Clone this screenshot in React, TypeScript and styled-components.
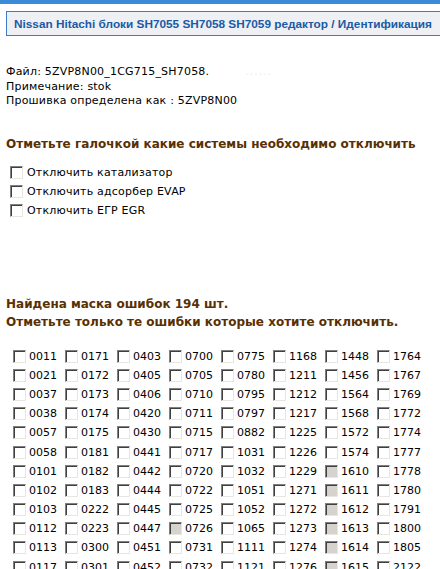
import React from "react";
import styled, { createGlobalStyle } from "styled-components";

const GlobalStyle = createGlobalStyle`
  html, body { margin: 0; padding: 0; background: #ffffff; overflow: hidden; }
  body { width: 440px; height: 569px; }
`;

const Page = styled.div`
  width: 440px;
  overflow: hidden;
  font-family: "DejaVu Sans", Verdana, sans-serif;
  color: #000;
`;

const TopBar = styled.div`
  height: 4px;
  background: #3b8bd8;
`;

const TitleBox = styled.div`
  margin: 7px 0 0 6px;
  width: 460px;
  height: 23px;
  box-sizing: content-box;
  border: 1px solid #3a7dc6;
  background: #eef0f3;
  display: flex;
  align-items: center;
  padding-left: 7px;
`;

const Title = styled.h1`
  margin: 0;
  font-family: "Liberation Sans", Arial, sans-serif;
  font-weight: bold;
  font-size: 11.8px;
  color: #1a5aa6;
  white-space: nowrap;
`;

const Info = styled.div`
  margin: 29px 0 0 6px;
  font-size: 11px;
  line-height: 14.5px;
  letter-spacing: 0.2px;
`;

const Redacted = styled.span`
  color: #ececec;
  letter-spacing: 1px;
  padding-left: 36px;
`;

const Heading = styled.h2<{ $top: number }>`
  margin: ${(p) => p.$top}px 0 0 6px;
  font-family: "DejaVu Sans", Verdana, sans-serif;
  font-weight: bold;
  font-size: 12px;
  line-height: 18px;
  color: #5a3002;
`;

const OptionList = styled.div`
  margin: 13px 0 0 10px;
  display: flex;
  flex-direction: column;
  gap: 6px;
`;

const OptionRow = styled.label`
  display: flex;
  align-items: center;
  gap: 4px;
  font-size: 11px;
  height: 13px;
  letter-spacing: 0.2px;
`;

const Box = styled.span<{ $disabled?: boolean }>`
  display: inline-block;
  flex: none;
  width: 13px;
  height: 13px;
  box-sizing: border-box;
  border-top: 1px solid #808080;
  border-left: 1px solid #808080;
  border-right: 1px solid #e8e6e0;
  border-bottom: 1px solid #e8e6e0;
  background: ${(p) => (p.$disabled ? "#d6d3ce" : "#ffffff")};
  box-shadow: inset 1px 1px 0 #404040;
`;

const Grid = styled.div`
  margin: 16px 0 0 13px;
  display: grid;
  grid-template-columns: repeat(8, 52px);
  grid-auto-rows: 19.2px;
`;

const Cell = styled.label`
  display: flex;
  align-items: center;
  gap: 3px;
  font-size: 11px;
  white-space: nowrap;
`;

const codes: string[][] = [
  ["0011", "0171", "0403", "0700", "0775", "1168", "1448", "1764"],
  ["0021", "0172", "0405", "0705", "0780", "1211", "1456", "1767"],
  ["0037", "0173", "0406", "0710", "0795", "1212", "1564", "1769"],
  ["0038", "0174", "0420", "0711", "0797", "1217", "1568", "1772"],
  ["0057", "0175", "0430", "0715", "0882", "1225", "1572", "1774"],
  ["0058", "0181", "0441", "0717", "1031", "1226", "1574", "1777"],
  ["0101", "0182", "0442", "0720", "1032", "1229", "1610", "1778"],
  ["0102", "0183", "0444", "0722", "1051", "1271", "1611", "1780"],
  ["0103", "0222", "0445", "0725", "1052", "1272", "1612", "1791"],
  ["0112", "0223", "0447", "0726", "1065", "1273", "1613", "1800"],
  ["0113", "0300", "0451", "0731", "1111", "1274", "1614", "1805"],
  ["0117", "0301", "0452", "0732", "1121", "1276", "1615", "2122"],
];

const disabledCodes = new Set(["0726", "1610", "1611", "1612", "1613", "1614", "1615"]);

const options = [
  "Отключить катализатор",
  "Отключить адсорбер EVAP",
  "Отключить ЕГР EGR",
];

export default function App() {
  return (
    <Page>
      <GlobalStyle />
      <TopBar />
      <TitleBox>
        <Title>Nissan Hitachi блоки SH7055 SH7058 SH7059 редактор / Идентификация</Title>
      </TitleBox>
      <Info>
        <div>
          Файл: 5ZVP8N00_1CG715_SH7058.<Redacted>......</Redacted>
        </div>
        <div>Примечание: stok</div>
        <div>Прошивка определена как : 5ZVP8N00</div>
      </Info>
      <Heading $top={26}>Отметьте галочкой какие системы необходимо отключить</Heading>
      <OptionList>
        {options.map((o) => (
          <OptionRow key={o}>
            <Box />
            {o}
          </OptionRow>
        ))}
      </OptionList>
      <Heading $top={78}>
        Найдена маска ошибок 194 шт.
        <br />
        Отметьте только те ошибки которые хотите отключить.
      </Heading>
      <Grid>
        {codes.flat().map((c) => (
          <Cell key={c}>
            <Box $disabled={disabledCodes.has(c)} />
            {c}
          </Cell>
        ))}
      </Grid>
    </Page>
  );
}
